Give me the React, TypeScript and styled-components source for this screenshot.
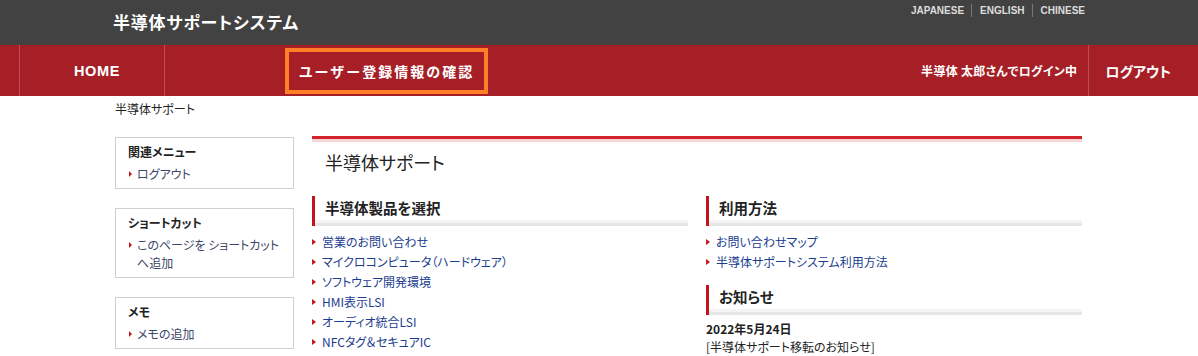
import React from "react";
import styled, { createGlobalStyle } from "styled-components";

const GlobalStyle = createGlobalStyle`
  html, body { margin: 0; padding: 0; background: #fff; }
  body {
    font-family: "Noto Sans CJK JP", "Liberation Sans", sans-serif;
    font-size: 12px;
    color: #333;
    font-feature-settings: "palt";
    overflow: hidden;
  }
  ul { margin: 0; padding: 0; list-style: none; }
  a { text-decoration: none; color: inherit; }
`;

const TopBar = styled.header`
  background: #424242;
  height: 45px;
`;

const TopInner = styled.div`
  width: 972px;
  margin: 0 auto;
  display: flex;
  justify-content: space-between;
  align-items: flex-start;
`;

const SiteTitle = styled.div`
  padding-top: 11px;
  line-height: 22px;
  font-size: 17px;
  font-weight: bold;
  color: #fff;
  letter-spacing: 0.8px;
`;

const LangList = styled.ul`
  display: flex;
  padding-top: 4px;
  line-height: 13px;
  font-family: "Liberation Sans", Arial, sans-serif;
  font-size: 10px;
  font-weight: bold;
  color: #ddd;
`;

const LangItem = styled.li<{ $first?: boolean }>`
  padding-left: ${(p) => (p.$first ? "0" : "8px")};
  margin-left: ${(p) => (p.$first ? "0" : "7px")};
  border-left: ${(p) => (p.$first ? "none" : "1px solid #777")};
`;

const Nav = styled.nav`
  background: #a61f27;
  height: 51px;
  display: flex;
  align-items: stretch;
  padding: 0 11px 0 19px;
  color: #fff;
  font-weight: bold;
  font-size: 14px;
`;

const NavItem = styled.a<{ $width?: number }>`
  display: flex;
  align-items: center;
  justify-content: center;
  border-left: 1px solid #c24c53;
  border-right: 1px solid #c24c53;
  width: ${(p) => (p.$width ? `${p.$width}px` : "auto")};
  box-sizing: border-box;
  padding-left: 10px;
  font-family: "Liberation Sans", "Noto Sans CJK JP", sans-serif;
  font-size: 14.5px;
  letter-spacing: 0.6px;
`;

const ActiveItem = styled.a`
  align-self: center;
  margin-left: 120px;
  width: 203px;
  height: 46px;
  box-sizing: border-box;
  border: 4px solid #ff7f27;
  display: flex;
  align-items: center;
  justify-content: center;
  font-size: 14px;
  letter-spacing: 2px;
  font-feature-settings: normal;
`;

const UserName = styled.div`
  margin-left: auto;
  padding-right: 11px;
  display: flex;
  align-items: center;
  font-size: 12px;
  letter-spacing: 0.3px;
`;

const LogoutItem = styled.a`
  display: flex;
  align-items: center;
  border-left: 1px solid #c24c53;
  padding: 0 16px;
  font-size: 14px;
`;

const Container = styled.div`
  width: 968px;
  margin: 0 auto;
`;

const Breadcrumb = styled.div`
  padding-top: 4px;
  line-height: 18px;
  font-size: 12px;
  color: #222;
`;

const Body = styled.div`
  display: flex;
  gap: 18px;
  margin-top: 18px;
  align-items: flex-start;
`;

const Sidebar = styled.aside`
  width: 179px;
  flex: none;
  padding-top: 1px;
`;

const SideBox = styled.section`
  border: 1px solid #cfcfcf;
  padding: 5px 12px 5px;
  margin-bottom: 19px;
`;

const SideTitle = styled.h3`
  margin: 0 0 2px;
  font-size: 12px;
  line-height: 18px;
  font-weight: bold;
  color: #222;
`;

const SideLink = styled.li`
  position: relative;
  padding: 2px 0 0 9px;
  line-height: 18px;
  color: #3b4668;
  &::before {
    content: "";
    position: absolute;
    left: 1px;
    top: 8px;
    border-left: 3px solid #c8161d;
    border-top: 3px solid transparent;
    border-bottom: 3px solid transparent;
  }
`;

const Main = styled.main`
  width: 770px;
  flex: none;
`;

const TopRule = styled.div`
  height: 0;
  border-top: 3px solid #d2232a;
  border-bottom: 3px solid #f7d6d8;
`;

const PageTitle = styled.h1`
  margin: 8px 0 22px 13px;
  font-size: 18px;
  line-height: 24px;
  font-weight: normal;
  color: #222;
`;

const Columns = styled.div`
  display: grid;
  grid-template-columns: 1fr 1fr;
  gap: 18px;
`;

const SecHead = styled.h2<{ $gap?: number }>`
  margin: ${(p) => p.$gap ?? 0}px 0 0;
  height: 30px;
  box-sizing: border-box;
  border-left: 3px solid #c4141b;
  padding: 0 0 6px 10px;
  line-height: 24px;
  font-size: 14.5px;
  font-weight: bold;
  color: #222;
  background: linear-gradient(
    to bottom,
    #fff 0,
    #fff 24px,
    #f4f4f4 24px,
    #f4f4f4 27px,
    #e6e6e6 27px
  );
`;

const LinkList = styled.ul`
  padding-top: 6px;
`;

const LinkItem = styled.li`
  position: relative;
  padding-left: 10px;
  line-height: 20px;
  color: #1b3d8f;
  &::before {
    content: "";
    position: absolute;
    left: 0;
    top: 7px;
    border-left: 4px solid #c8161d;
    border-top: 3px solid transparent;
    border-bottom: 3px solid transparent;
  }
`;

const NewsDate = styled.div`
  margin-top: 5px;
  line-height: 18px;
  font-weight: bold;
  color: #222;
`;

const NewsText = styled.div`
  line-height: 17px;
  color: #222;
`;

const products = [
  "営業のお問い合わせ",
  "マイクロコンピュータ（ハードウェア）",
  "ソフトウェア開発環境",
  "HMI表示LSI",
  "オーディオ統合LSI",
  "NFCタグ＆セキュアIC",
];

const usage = ["お問い合わせマップ", "半導体サポートシステム利用方法"];

export default function App() {
  return (
    <>
      <GlobalStyle />
      <TopBar>
        <TopInner>
          <SiteTitle>半導体サポートシステム</SiteTitle>
          <LangList>
            <LangItem $first>JAPANESE</LangItem>
            <LangItem>ENGLISH</LangItem>
            <LangItem>CHINESE</LangItem>
          </LangList>
        </TopInner>
      </TopBar>
      <Nav>
        <NavItem $width={146}>HOME</NavItem>
        <ActiveItem>ユーザー登録情報の確認</ActiveItem>
        <UserName>半導体 太郎さんでログイン中</UserName>
        <LogoutItem>ログアウト</LogoutItem>
      </Nav>
      <Container>
        <Breadcrumb>半導体サポート</Breadcrumb>
        <Body>
          <Sidebar>
            <SideBox>
              <SideTitle>関連メニュー</SideTitle>
              <ul>
                <SideLink>ログアウト</SideLink>
              </ul>
            </SideBox>
            <SideBox>
              <SideTitle>ショートカット</SideTitle>
              <ul>
                <SideLink>このページを ショートカットへ追加</SideLink>
              </ul>
            </SideBox>
            <SideBox>
              <SideTitle>メモ</SideTitle>
              <ul>
                <SideLink>メモの追加</SideLink>
              </ul>
            </SideBox>
          </Sidebar>
          <Main>
            <TopRule />
            <PageTitle>半導体サポート</PageTitle>
            <Columns>
              <section>
                <SecHead>半導体製品を選択</SecHead>
                <LinkList>
                  {products.map((p) => (
                    <LinkItem key={p}>{p}</LinkItem>
                  ))}
                </LinkList>
              </section>
              <section>
                <SecHead>利用方法</SecHead>
                <LinkList>
                  {usage.map((p) => (
                    <LinkItem key={p}>{p}</LinkItem>
                  ))}
                </LinkList>
                <SecHead $gap={13}>お知らせ</SecHead>
                <NewsDate>2022年5月24日</NewsDate>
                <NewsText>[半導体サポート移転のお知らせ]</NewsText>
              </section>
            </Columns>
          </Main>
        </Body>
      </Container>
    </>
  );
}
